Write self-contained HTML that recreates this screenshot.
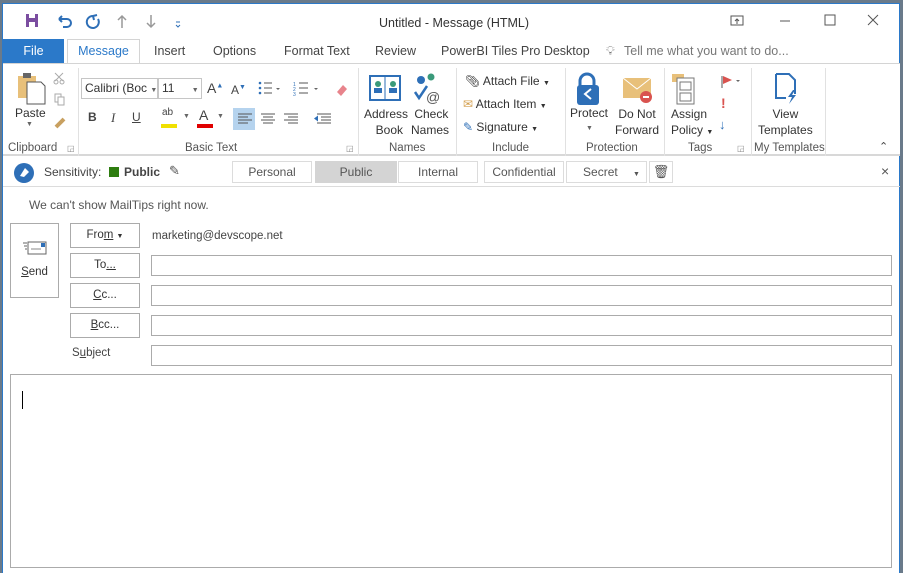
<!DOCTYPE html>
<html><head><meta charset="utf-8"><style>
*{box-sizing:border-box;margin:0;padding:0}
body{width:903px;height:573px;overflow:hidden;background:#6a7a8a;font-family:"Liberation Sans",sans-serif;font-size:12px;color:#444;position:relative}
.win{position:absolute;left:2px;top:3px;width:898px;height:570px;background:#fff;border-left:1px solid #2b79c9;border-right:1px solid #2b79c9;border-top:1px solid #2b79c9}
.a{position:absolute;white-space:nowrap}
.tab{position:absolute;top:40px;font-size:12.5px;color:#444}
.lbl{position:absolute;top:138px;font-size:11.5px;color:#555}
.sep{position:absolute;top:64px;width:1px;height:88px;background:#e1e1e1}
.btn{position:absolute;border:1px solid #ababab;background:#fff;font-size:11.5px;color:#333;text-align:center}
.inp{position:absolute;left:148px;width:741px;height:21px;border:1px solid #ababab}
.sb{position:absolute;top:157px;height:22px;border:1px solid #dcdcdc;background:#fff;font-size:12px;color:#555;text-align:center;line-height:20px}
</style></head><body>
<div class="win">
<svg class="a" style="left:20px;top:8px" width="160" height="18">
<rect x="3" y="2" width="12" height="13" fill="#7b4da0"/><rect x="6" y="2" width="6" height="4" fill="#fff"/><rect x="6" y="10" width="6" height="5" fill="#fff"/>
<path d="M36 7h8a4 4 0 0 1 0 8h-4M36 7l3-3M36 7l3 3" stroke="#2e6fb7" stroke-width="2" fill="none"/>
<path d="M70 4a6 6 0 1 0 5 3M70 4l4-1M70 4l1 4" stroke="#2e6fb7" stroke-width="2" fill="none"/>
<path d="M99 16V4M95 8l4-4 4 4" stroke="#999" stroke-width="1.5" fill="none"/>
<path d="M128 3v12M124 11l4 4 4-4" stroke="#999" stroke-width="1.5" fill="none"/>
<path d="M153 10h4M153 13l2 2 2-2" stroke="#2e6fb7" stroke-width="1" fill="none"/>
</svg>
<div class="a" style="left:376px;top:12px;font-size:12.5px;color:#333">Untitled - Message (HTML)</div>
<svg class="a" style="left:725px;top:8px" width="170" height="18">
<rect x="3" y="4" width="12" height="9" fill="none" stroke="#555"/><path d="M9 12V7M7 9l2-2 2 2" stroke="#555" fill="none"/>
<path d="M52 9h10" stroke="#555"/>
<rect x="97" y="3" width="10" height="10" fill="none" stroke="#555"/>
<path d="M140 3l10 10M150 3l-10 10" stroke="#555"/>
</svg>
<div class="a" style="left:0;top:35px;width:61px;height:24px;background:#2b79c9;color:#fff;font-size:12.5px;text-align:center;line-height:24px">File</div>
<div class="a" style="left:64px;top:35px;width:73px;height:25px;border:1px solid #d4d4d4;border-bottom:none;background:#fff;color:#2b79c9;font-size:12.5px;text-align:center;line-height:23px">Message</div>
<div class="tab" style="left:151px">Insert</div>
<div class="tab" style="left:210px">Options</div>
<div class="tab" style="left:281px">Format Text</div>
<div class="tab" style="left:372px">Review</div>
<div class="tab" style="left:438px">PowerBI Tiles Pro Desktop</div>
<div class="tab" style="left:603px;color:#777">&#x1F4A1;&#xFE0E;</div>
<div class="tab" style="left:621px;color:#777">Tell me what you want to do...</div>
<div class="a" style="left:0;top:59px;width:897px;height:1px;background:#d4d4d4"></div>
<div class="a" style="left:0;top:60px;width:897px;height:92px;background:#fff;border-bottom:2px solid #d8d8d8"></div>
<svg class="a" style="left:10px;top:66px" width="60" height="66">
<rect x="5" y="6" width="18" height="22" fill="#e8c07a"/><rect x="10" y="3" width="8" height="5" fill="#666"/><path d="M14 12h14l4 4v18H14z" fill="#fff" stroke="#555"/>
<path d="M42 3l8 8M50 3l-8 8" stroke="#aaa"/><circle cx="43" cy="12" r="2" fill="none" stroke="#aaa"/><circle cx="49" cy="12" r="2" fill="none" stroke="#aaa"/>
<rect x="42" y="24" width="6" height="8" fill="none" stroke="#aaa"/><rect x="45" y="27" width="6" height="8" fill="#fff" stroke="#aaa"/>
<path d="M43 57l8-8" stroke="#c8a060" stroke-width="4"/>
</svg>
<div class="a" style="left:12px;top:102px;font-size:12px;color:#333">Paste</div>
<div class="a" style="left:23px;top:117px;font-size:7px;color:#666">▼</div>
<div class="lbl" style="left:5px">Clipboard</div>
<div class="a" style="left:64px;top:140px;font-size:8px;color:#888">◲</div>
<div class="sep" style="left:75px"></div>
<div class="a" style="left:78px;top:74px;width:77px;height:21px;border:1px solid #c6c6c6;font-size:12px;line-height:19px;padding-left:3px;color:#333">Calibri (Boc <span style="font-size:7px;color:#666">▼</span></div>
<div class="a" style="left:155px;top:74px;width:44px;height:21px;border:1px solid #c6c6c6;font-size:12px;line-height:19px;padding-left:3px;color:#333">11 <span style="font-size:7px;color:#666;margin-left:14px">▼</span></div>
<div class="a" style="left:204px;top:76px;font-size:14px;color:#444">A<sup style="font-size:7px;color:#2e6fb7">▲</sup></div>
<div class="a" style="left:228px;top:79px;font-size:12px;color:#444">A<sup style="font-size:7px;color:#2e6fb7">▼</sup></div>
<svg class="a" style="left:254px;top:76px" width="120" height="16"><g fill="#2e6fb7"><circle cx="3" cy="3" r="1.3"/><circle cx="3" cy="8" r="1.3"/><circle cx="3" cy="13" r="1.3"/></g><path d="M7 3h8M7 8h8M7 13h8M42 3h9M42 8h9M42 13h9" stroke="#555"/><path d="M19 8h4l-2 2z" fill="#666"/><path d="M57 8h4l-2 2z" fill="#666"/><text x="36" y="6" font-size="5" fill="#2e6fb7">1</text><text x="36" y="11" font-size="5" fill="#2e6fb7">2</text><text x="36" y="16" font-size="5" fill="#2e6fb7">3</text><path d="M80 12l6-7 4 4-6 7z" fill="#e8848c"/></svg>
<div class="a" style="left:85px;top:106px;font-weight:bold;color:#444">B</div>
<div class="a" style="left:108px;top:106px;font-style:italic;font-family:'Liberation Serif',serif;font-size:13px;color:#444">I</div>
<div class="a" style="left:129px;top:106px;text-decoration:underline;color:#444">U</div>
<div class="a" style="left:158px;top:120px;width:16px;height:4px;background:#f0e000"></div>
<div class="a" style="left:159px;top:103px;font-size:10px;color:#444">ab</div>
<div class="a" style="left:194px;top:120px;width:16px;height:4px;background:#e00000"></div>
<div class="a" style="left:196px;top:103px;font-size:14px;color:#444">A</div>
<div class="a" style="left:180px;top:109px;font-size:7px;color:#666">▼</div>
<div class="a" style="left:214px;top:109px;font-size:7px;color:#666">▼</div>
<div class="a" style="left:230px;top:104px;width:22px;height:22px;background:#b5d3ee"></div>
<svg class="a" style="left:233px;top:108px" width="100" height="14"><path d="M2 2h14M2 5h10M2 8h14M2 11h10M25 2h14M27 5h10M25 8h14M27 11h10M48 2h14M52 5h10M48 8h14M52 11h10M81 2h14M85 5h10M85 8h10M81 11h14" stroke="#555"/><path d="M78 6.5l4-3v6z" fill="#2e6fb7"/></svg>
<div class="lbl" style="left:182px">Basic Text</div>
<div class="a" style="left:343px;top:140px;font-size:8px;color:#888">◲</div>
<div class="sep" style="left:355px"></div>
<svg class="a" style="left:365px;top:68px" width="80" height="32"><rect x="2" y="4" width="30" height="24" fill="#fff" stroke="#2e6fb7" stroke-width="2"/><path d="M17 4v24" stroke="#2e6fb7"/><circle cx="10" cy="12" r="3" fill="#3a9a7a"/><circle cx="25" cy="12" r="3" fill="#3a9a7a"/><rect x="6" y="16" width="8" height="5" fill="#2e6fb7"/><rect x="21" y="16" width="8" height="5" fill="#2e6fb7"/>
<circle cx="53" cy="8" r="4" fill="#2e6fb7"/><circle cx="63" cy="5" r="3.5" fill="#3a9a7a"/><path d="M47 20l4 6 8-12" stroke="#2e6fb7" stroke-width="2.5" fill="none"/><text x="58" y="30" font-size="14" fill="#555">@</text></svg>
<div class="a" style="left:361px;top:102px;font-size:12px;color:#333;text-align:center;line-height:16px">Address<br>&nbsp;&nbsp;Book</div>
<div class="a" style="left:408px;top:102px;font-size:12px;color:#333;line-height:16px">&nbsp;Check<br>Names</div>
<div class="lbl" style="left:386px">Names</div>
<div class="sep" style="left:453px"></div>
<div class="a" style="left:462px;top:70px;font-size:12px;color:#333">&#x1F4CE;&#xFE0E; Attach File <span style="font-size:7px">▼</span></div>
<div class="a" style="left:460px;top:93px;font-size:12px;color:#333"><span style="color:#d4a050">✉</span> Attach Item <span style="font-size:7px">▼</span></div>
<div class="a" style="left:460px;top:116px;font-size:12px;color:#333"><span style="color:#2e6fb7">✎</span> Signature <span style="font-size:7px">▼</span></div>
<div class="lbl" style="left:489px">Include</div>
<div class="sep" style="left:562px"></div>
<svg class="a" style="left:570px;top:68px" width="85" height="34"><path d="M7 14v-5a7 7 0 0 1 14 0v5" stroke="#2e6fb7" stroke-width="3" fill="none"/><rect x="4" y="13" width="22" height="20" rx="3" fill="#2e6fb7"/><path d="M18 17l-6 5 6 5" stroke="#fff" stroke-width="2" fill="none"/>
<rect x="50" y="6" width="28" height="20" fill="#e8c07a"/><path d="M50 6l14 11 14-11" stroke="#fff" fill="none"/><circle cx="73" cy="25" r="6" fill="#d9534f"/><path d="M70 25h6" stroke="#fff" stroke-width="2"/></svg>
<div class="a" style="left:567px;top:102px;font-size:12px;color:#333">Protect</div>
<div class="a" style="left:583px;top:121px;font-size:7px;color:#666">▼</div>
<div class="a" style="left:612px;top:102px;font-size:12px;color:#333;line-height:16px">&nbsp;Do Not<br>Forward</div>
<div class="lbl" style="left:583px">Protection</div>
<div class="sep" style="left:661px"></div>
<svg class="a" style="left:668px;top:68px" width="75" height="34"><rect x="1" y="2" width="12" height="8" fill="#e8c07a"/><rect x="6" y="6" width="17" height="26" fill="#fff" stroke="#777"/><rect x="9" y="10" width="11" height="8" fill="none" stroke="#777"/><rect x="9" y="21" width="11" height="8" fill="none" stroke="#777"/>
<path d="M51 4v12" stroke="#555"/><path d="M52 4l9 4-9 4z" fill="#d9534f"/><path d="M65 8h4l-2 2z" fill="#666"/></svg>
<div class="a" style="left:718px;top:91px;font-size:14px;font-weight:bold;color:#d9534f">!</div>
<div class="a" style="left:716px;top:113px;font-size:13px;font-weight:bold;color:#2e6fb7">↓</div>
<div class="a" style="left:668px;top:102px;font-size:12px;color:#333;line-height:16px">Assign<br>Policy <span style="font-size:7px">▼</span></div>
<div class="lbl" style="left:685px">Tags</div>
<div class="a" style="left:734px;top:140px;font-size:8px;color:#888">◲</div>
<div class="sep" style="left:748px"></div>
<svg class="a" style="left:770px;top:68px" width="30" height="34"><path d="M3 2h13l6 6v14M3 2v24h10" stroke="#2e6fb7" stroke-width="2" fill="none"/><path d="M20 18l-5 7h4l-3 7 7-9h-4l3-5z" fill="#2e6fb7"/></svg>
<div class="a" style="left:755px;top:102px;font-size:12px;color:#333;line-height:16px;text-align:center">View<br>Templates</div>
<div class="lbl" style="left:751px">My Templates</div>
<div class="sep" style="left:822px"></div>
<div class="a" style="left:876px;top:136px;font-size:11px;color:#444">⌃</div>
<svg class="a" style="left:10px;top:158px" width="22" height="22"><circle cx="11" cy="11" r="10" fill="#2e6fb7"/><path d="M7 14l5-8 4 4-5 5z" fill="#fff"/></svg>
<div class="a" style="left:41px;top:161px;font-size:12px;color:#444">Sensitivity:</div>
<div class="a" style="left:106px;top:163px;width:10px;height:10px;background:#2e7d10"></div>
<div class="a" style="left:121px;top:161px;font-size:12px;font-weight:bold;color:#444">Public</div>
<div class="a" style="left:166px;top:159px;font-size:13px;color:#555">✎</div>
<div class="sb" style="left:229px;width:80px">Personal</div>
<div class="sb" style="left:312px;width:82px;background:#d4d4d4;border-color:#d4d4d4">Public</div>
<div class="sb" style="left:395px;width:80px">Internal</div>
<div class="sb" style="left:481px;width:80px">Confidential</div>
<div class="sb" style="left:563px;width:81px">&nbsp;&nbsp;&nbsp;Secret <span style="font-size:7px;margin-left:12px">▼</span></div>
<div class="sb" style="left:646px;width:24px;font-size:13px">&#x1F5D1;&#xFE0E;</div>
<div class="a" style="left:878px;top:159px;font-size:14px;color:#555">×</div>
<div class="a" style="left:0;top:182px;width:897px;height:1px;background:#dcdcdc"></div>
<div class="a" style="left:26px;top:194px;font-size:12px;color:#555">We can't show MailTips right now.</div>
<div class="btn" style="left:7px;top:219px;width:49px;height:75px"><svg width="30" height="20" style="margin-top:15px"><rect x="8" y="3" width="18" height="12" fill="#fff" stroke="#666"/><rect x="21" y="4" width="4" height="4" fill="#2e6fb7"/><path d="M11 10h10" stroke="#888"/><path d="M3 4h4M4 7h3M5 10h2" stroke="#666"/></svg><div style="margin-top:4px"><u>S</u>end</div></div>
<div class="btn" style="left:67px;top:219px;width:70px;height:25px;line-height:23px">Fro<u>m</u> <span style="font-size:7px">▼</span></div>
<div class="a" style="left:149px;top:226px;font-size:11.5px;color:#444">marketing@devscope.net</div>
<div class="btn" style="left:67px;top:249px;width:70px;height:25px;line-height:23px">To<u>...</u></div>
<div class="btn" style="left:67px;top:279px;width:70px;height:25px;line-height:23px"><u>C</u>c...</div>
<div class="btn" style="left:67px;top:309px;width:70px;height:25px;line-height:23px"><u>B</u>cc...</div>
<div class="a" style="left:69px;top:343px;font-size:11.5px;color:#444">S<u>u</u>bject</div>
<div class="inp" style="top:251px"></div>
<div class="inp" style="top:281px"></div>
<div class="inp" style="top:311px"></div>
<div class="inp" style="top:341px"></div>
<div class="a" style="left:7px;top:370px;width:882px;height:194px;border:1px solid #ababab"></div>
<div class="a" style="left:19px;top:387px;width:1px;height:18px;background:#000"></div>
</div>
</body></html>
